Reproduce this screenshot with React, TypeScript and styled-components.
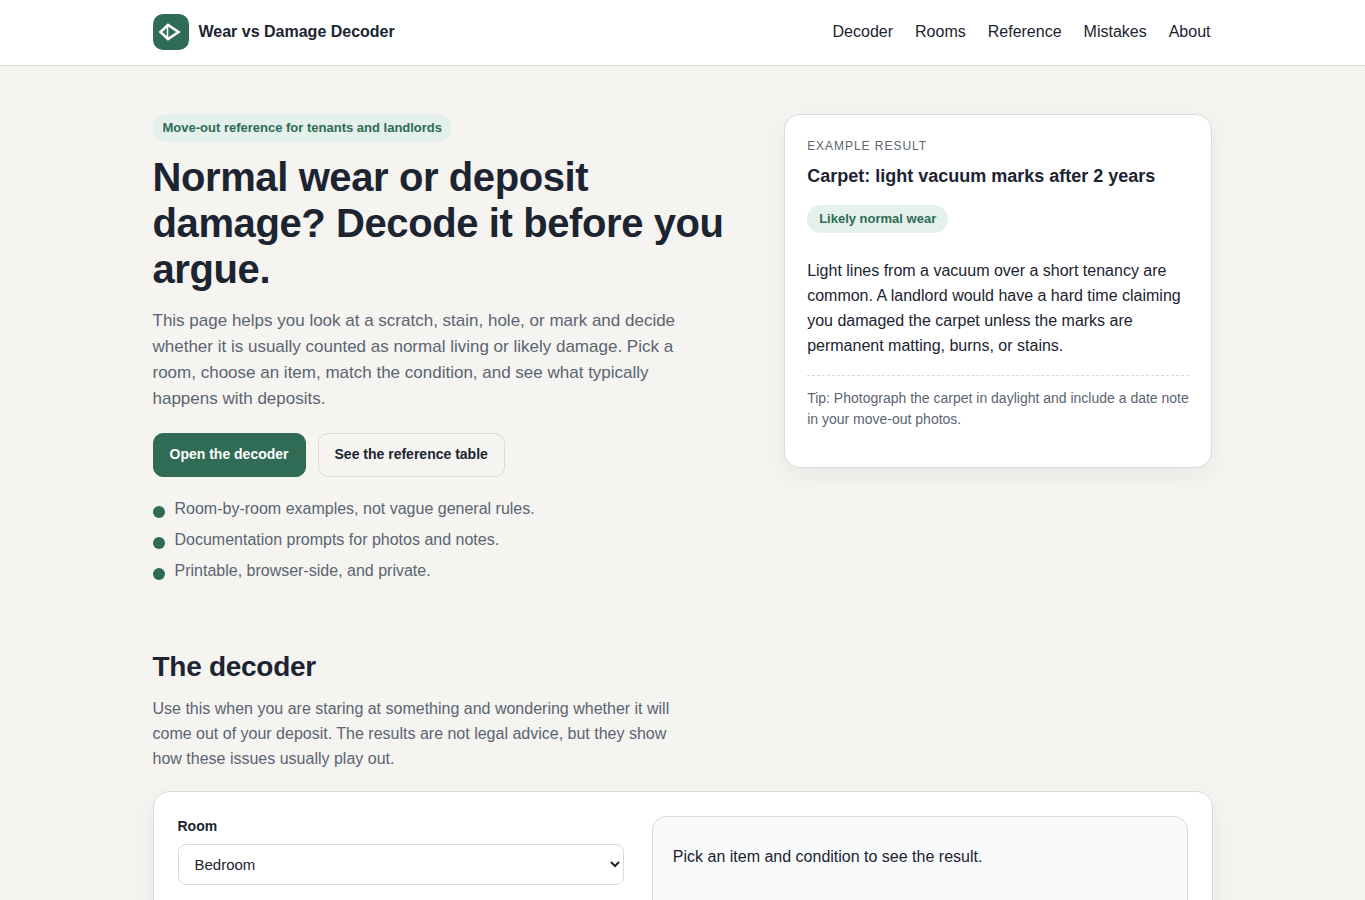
import React from "react";
import styled, { createGlobalStyle } from "styled-components";

const color = {
  ink: "#1b2430",
  muted: "#5b6472",
  line: "#d9dcdc",
  green: "#2f6b55",
  mint: "#e3f0eb",
  page: "#f5f4f0",
};

const GlobalStyle = createGlobalStyle`
  *, *::before, *::after { box-sizing: border-box; }
  body {
    margin: 0;
    background: ${color.page};
    color: ${color.ink};
    font: 16px/25px "Liberation Sans", Arial, sans-serif;
  }
`;

const Container = styled.div`
  width: 100%;
  max-width: 1100px;
  margin: 0 auto;
  padding: 0 20px;
`;

const Header = styled.header`
  background: #fff;
  border-bottom: 1px solid ${color.line};
`;

const HeaderRow = styled(Container)`
  display: flex;
  align-items: center;
  justify-content: space-between;
  flex-wrap: wrap;
  gap: 12px;
  padding-top: 14px;
  padding-bottom: 15px;
`;

const Brand = styled.a`
  display: flex;
  align-items: center;
  gap: 10px;
  color: inherit;
  font-weight: 700;
  line-height: 24px;
  text-decoration: none;
`;

const LogoMark = styled.svg`
  display: block;
  width: 36px;
  height: 36px;
`;

const Nav = styled.nav`
  display: flex;
  flex-wrap: wrap;
  gap: 22px;
  padding-right: 2px;
  line-height: 24px;
`;

const NavLink = styled.a`
  color: inherit;
  text-decoration: none;
`;

const Hero = styled(Container)`
  display: grid;
  grid-template-columns: minmax(0, 1.4fr) minmax(0, 1fr);
  align-items: start;
  gap: 32px;
  padding-top: 48px;
  padding-bottom: 32px;

  @media (max-width: 820px) {
    grid-template-columns: minmax(0, 1fr);
  }
`;

const Pill = styled.span<{ $inset: number }>`
  display: inline-block;
  padding: 4px ${(p) => p.$inset}px;
  border-radius: 999px;
  background: ${color.mint};
  color: ${color.green};
  font-size: 13px;
  font-weight: 700;
  line-height: 20px;
  vertical-align: top;
`;

const Title = styled.h1`
  margin: 12px 0 16px;
  font-size: 40px;
  line-height: 46px;
  letter-spacing: -0.01em;
`;

const Lead = styled.p`
  max-width: 540px;
  margin: 0 0 21px;
  color: ${color.muted};
  font-size: 17px;
  line-height: 26px;
`;

const Actions = styled.div`
  display: flex;
  flex-wrap: wrap;
  gap: 12px;
`;

const ActionLink = styled.a<{ $primary?: boolean }>`
  padding: 10px 16px 12px;
  border: 1px solid ${(p) => (p.$primary ? color.green : color.line)};
  border-radius: 10px;
  background: ${(p) => (p.$primary ? color.green : "transparent")};
  color: ${(p) => (p.$primary ? "#fff" : color.ink)};
  font-size: 14px;
  font-weight: 700;
  line-height: 20px;
  text-decoration: none;
`;

const Points = styled.ul`
  display: grid;
  gap: 6px;
  margin: 19px 0 0;
  padding: 0;
  color: ${color.muted};
  list-style: none;
`;

const Point = styled.li`
  display: flex;
  gap: 10px;

  &::before {
    content: "";
    flex: none;
    width: 12px;
    height: 12px;
    margin-top: 10px;
    border-radius: 50%;
    background: ${color.green};
  }
`;

const Card = styled.div`
  border: 1px solid ${color.line};
  border-radius: 16px;
  background: #fff;
  box-shadow: 0 8px 24px rgba(26, 32, 44, 0.06);
`;

const ExampleCard = styled(Card)`
  padding: 22px 22px 37px;
`;

const Eyebrow = styled.div`
  color: ${color.muted};
  font-size: 12px;
  line-height: 18px;
  letter-spacing: 0.08em;
  text-transform: uppercase;
`;

const CardTitle = styled.h3`
  margin: 7px 0 15px;
  font-size: 18px;
  line-height: 28px;
`;

const CardText = styled.p`
  margin: 25px 0 17px;
`;

const Tip = styled.p`
  margin: 0;
  padding-top: 12px;
  border-top: 1px dashed ${color.line};
  color: ${color.muted};
  font-size: 14px;
  line-height: 21px;
`;

const Section = styled(Container)`
  padding-top: 34px;
  padding-bottom: 32px;
`;

const SectionTitle = styled.h2`
  margin: 0 0 11px;
  font-size: 28px;
  line-height: 36px;
  letter-spacing: -0.01em;
`;

const SectionIntro = styled.p`
  max-width: 540px;
  margin: 0 0 20px;
  color: ${color.muted};
`;

const DecoderCard = styled(Card)`
  display: grid;
  grid-template-columns: minmax(0, 1fr) minmax(0, 1.2fr);
  gap: 28px;
  padding: 24px;

  @media (max-width: 820px) {
    grid-template-columns: minmax(0, 1fr);
  }
`;

const Field = styled.div`
  display: flex;
  flex-direction: column;
  gap: 8px;
`;

const Label = styled.label`
  font-size: 14px;
  font-weight: 700;
  line-height: 20px;
`;

const Select = styled.select`
  width: 100%;
  height: 41px;
  padding: 0 0 0 12px;
  border: 1px solid ${color.line};
  border-radius: 8px;
  background: #fff;
  color: ${color.ink};
  font: 15px "Liberation Sans", Arial, sans-serif;
`;

const Result = styled.div`
  min-height: 240px;
  padding: 27px 20px;
  border: 1px solid ${color.line};
  border-radius: 14px;
  background: #f8fafc;
`;

const navItems = ["Decoder", "Rooms", "Reference", "Mistakes", "About"];

const points = [
  "Room-by-room examples, not vague general rules.",
  "Documentation prompts for photos and notes.",
  "Printable, browser-side, and private.",
];

export default function App() {
  return (
    <>
      <GlobalStyle />
      <Header>
        <HeaderRow>
          <Brand href="#top">
            <LogoMark viewBox="0 0 36 36" aria-hidden="true">
              <rect width="36" height="36" rx="10" fill={color.green} />
              <path
                d="M7.5 18 15 11 25.5 18 15 25Z"
                fill="none"
                stroke="#fff"
                strokeWidth="2.6"
                strokeLinejoin="miter"
              />
              <path d="M14.5 12v12" stroke="#fff" strokeWidth="1.6" />
            </LogoMark>
            Wear vs Damage Decoder
          </Brand>
          <Nav>
            {navItems.map((item) => (
              <NavLink key={item} href={`#${item.toLowerCase()}`}>
                {item}
              </NavLink>
            ))}
          </Nav>
        </HeaderRow>
      </Header>
      <main id="top">
        <Hero>
          <div>
            <Pill $inset={10}>Move-out reference for tenants and landlords</Pill>
            <Title>Normal wear or deposit damage? Decode it before you argue.</Title>
            <Lead>
              This page helps you look at a scratch, stain, hole, or mark and decide whether it is
              usually counted as normal living or likely damage. Pick a room, choose an item, match
              the condition, and see what typically happens with deposits.
            </Lead>
            <Actions>
              <ActionLink $primary href="#decoder">
                Open the decoder
              </ActionLink>
              <ActionLink href="#reference">See the reference table</ActionLink>
            </Actions>
            <Points>
              {points.map((point) => (
                <Point key={point}>{point}</Point>
              ))}
            </Points>
          </div>
          <ExampleCard>
            <Eyebrow>Example result</Eyebrow>
            <CardTitle>Carpet: light vacuum marks after 2 years</CardTitle>
            <Pill $inset={12}>Likely normal wear</Pill>
            <CardText>
              Light lines from a vacuum over a short tenancy are common. A landlord would have a
              hard time claiming you damaged the carpet unless the marks are permanent matting,
              burns, or stains.
            </CardText>
            <Tip>
              Tip: Photograph the carpet in daylight and include a date note in your move-out
              photos.
            </Tip>
          </ExampleCard>
        </Hero>
        <Section id="decoder">
          <SectionTitle>The decoder</SectionTitle>
          <SectionIntro>
            Use this when you are staring at something and wondering whether it will come out of
            your deposit. The results are not legal advice, but they show how these issues usually
            play out.
          </SectionIntro>
          <DecoderCard>
            <Field>
              <Label htmlFor="room">Room</Label>
              <Select id="room" defaultValue="Bedroom">
                <option>Bedroom</option>
              </Select>
            </Field>
            <Result>Pick an item and condition to see the result.</Result>
          </DecoderCard>
        </Section>
      </main>
    </>
  );
}
